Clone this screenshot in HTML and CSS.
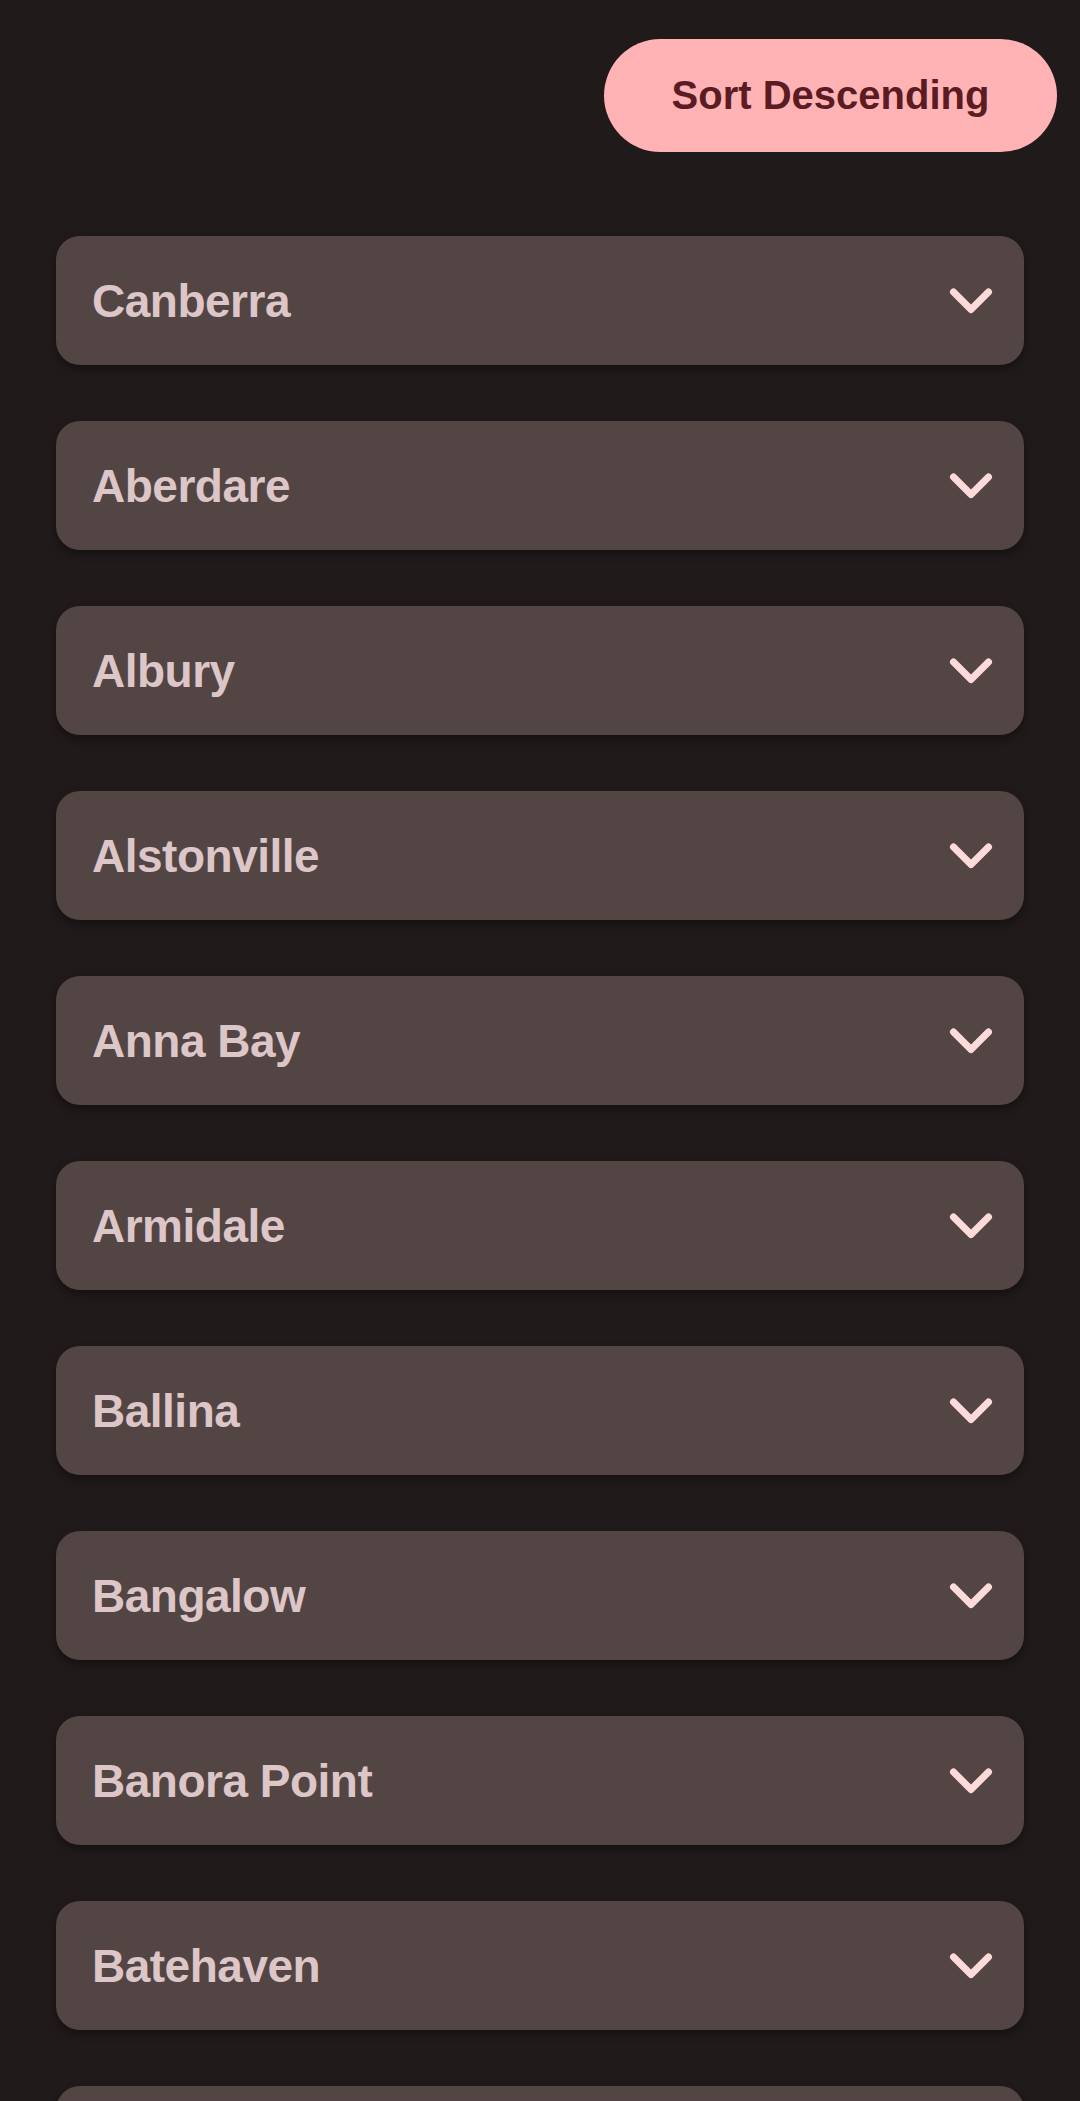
FILE: index.html
```html
<!DOCTYPE html>
<html lang="en">
<head>
<meta charset="utf-8">
<title>Cities</title>
<link rel="stylesheet" href="styles.css">
</head>
<body>
<div class="page">
  <div class="toolbar">
    <button class="sort-btn">Sort Descending</button>
  </div>
  <ul class="list">
    <li class="card"><span class="name">Canberra</span><svg class="chev" viewBox="0 0 48 48"><polyline points="6.5,15 24,32.5 41.5,15"/></svg></li>
    <li class="card"><span class="name">Aberdare</span><svg class="chev" viewBox="0 0 48 48"><polyline points="6.5,15 24,32.5 41.5,15"/></svg></li>
    <li class="card"><span class="name">Albury</span><svg class="chev" viewBox="0 0 48 48"><polyline points="6.5,15 24,32.5 41.5,15"/></svg></li>
    <li class="card"><span class="name">Alstonville</span><svg class="chev" viewBox="0 0 48 48"><polyline points="6.5,15 24,32.5 41.5,15"/></svg></li>
    <li class="card"><span class="name">Anna Bay</span><svg class="chev" viewBox="0 0 48 48"><polyline points="6.5,15 24,32.5 41.5,15"/></svg></li>
    <li class="card"><span class="name">Armidale</span><svg class="chev" viewBox="0 0 48 48"><polyline points="6.5,15 24,32.5 41.5,15"/></svg></li>
    <li class="card"><span class="name">Ballina</span><svg class="chev" viewBox="0 0 48 48"><polyline points="6.5,15 24,32.5 41.5,15"/></svg></li>
    <li class="card"><span class="name">Bangalow</span><svg class="chev" viewBox="0 0 48 48"><polyline points="6.5,15 24,32.5 41.5,15"/></svg></li>
    <li class="card"><span class="name">Banora Point</span><svg class="chev" viewBox="0 0 48 48"><polyline points="6.5,15 24,32.5 41.5,15"/></svg></li>
    <li class="card"><span class="name">Batehaven</span><svg class="chev" viewBox="0 0 48 48"><polyline points="6.5,15 24,32.5 41.5,15"/></svg></li>
    <li class="card"><span class="name">Batemans Bay</span><svg class="chev" viewBox="0 0 48 48"><polyline points="6.5,15 24,32.5 41.5,15"/></svg></li>
  </ul>
</div>
</body>
</html>
```
FILE: styles.css
```css
html, body {
  margin: 0;
  padding: 0;
  background: #201a1a;
  height: 2101px;
  overflow: hidden;
}
.page {
  font-family: "Liberation Sans", Arial, sans-serif;
  display: flex;
  flex-direction: column;
}
.toolbar {
  display: flex;
  justify-content: flex-end;
  padding: 39px 23px 0 0;
}
.sort-btn {
  height: 113px;
  width: 453px;
  border: none;
  border-radius: 57px;
  background: #ffb3b5;
  color: #5a1b22;
  font-family: "Liberation Sans", Arial, sans-serif;
  font-weight: 700;
  font-size: 40px;
  padding: 0;
}
.list {
  list-style: none;
  margin: 84px 56px 0 56px;
  padding: 0;
  display: flex;
  flex-direction: column;
  gap: 56px;
}
.card {
  height: 129px;
  box-sizing: border-box;
  background: #524544;
  border-radius: 24px;
  display: flex;
  align-items: center;
  justify-content: space-between;
  padding: 0 29px 0 36px;
  box-shadow: 0 4px 8px rgba(0, 0, 0, 0.35);
}
.name {
  color: #dcc6c7;
  font-size: 46px;
  letter-spacing: -0.5px;
  font-weight: 700;
}
.chev {
  width: 48px;
  height: 48px;
  fill: none;
  stroke: #ffdadb;
  stroke-width: 7;
  stroke-linecap: round;
  stroke-linejoin: round;
}
```
